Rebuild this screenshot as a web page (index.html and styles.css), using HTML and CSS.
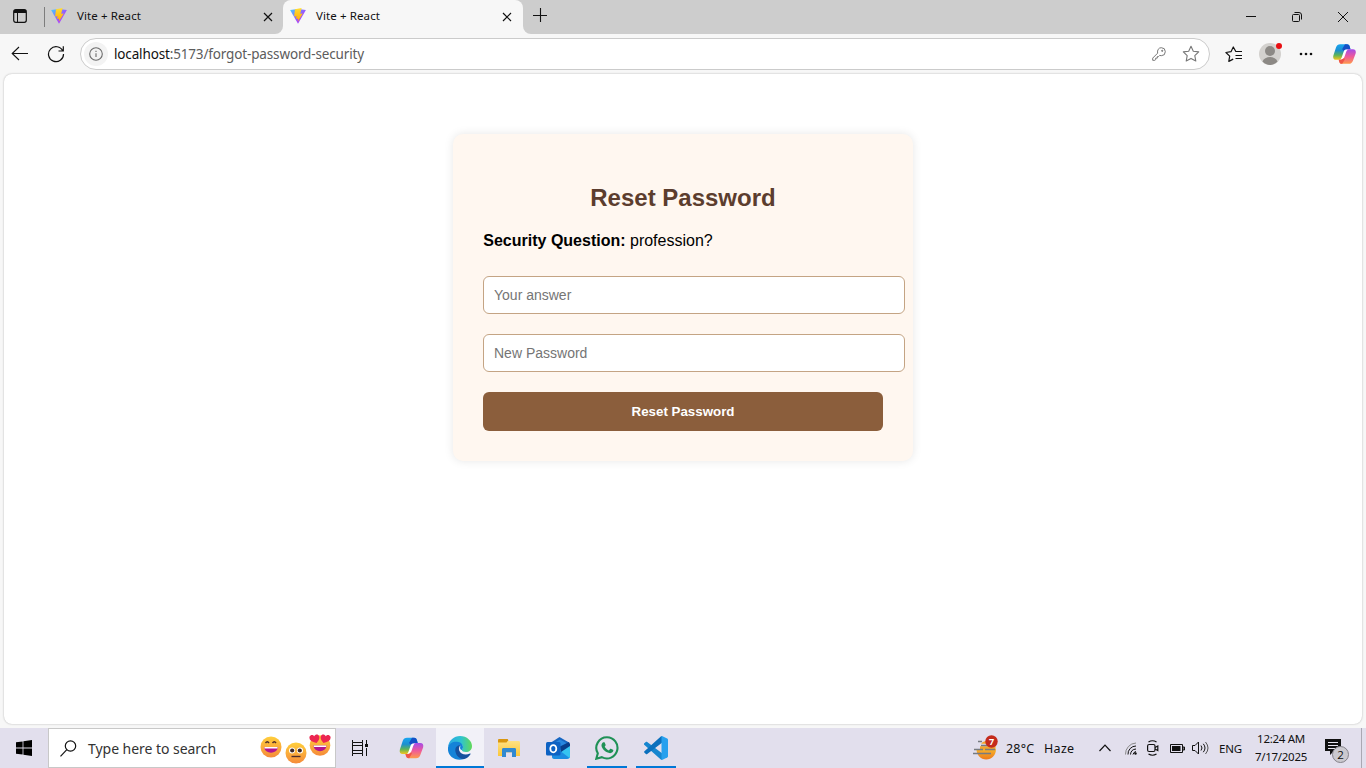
FILE: index.html
```html
<!DOCTYPE html>
<html lang="en">
<head>
<meta charset="utf-8">
<title>Vite + React</title>
<link rel="stylesheet" href="styles.css">
</head>
<body>
<svg class="defs" width="0" height="0" aria-hidden="true">
  <defs>
    <linearGradient id="viteA" x1="0" y1="0" x2="1" y2="1"><stop offset="0" stop-color="#41d1ff"/><stop offset=".6" stop-color="#a04dfe"/><stop offset="1" stop-color="#bd34fe"/></linearGradient>
    <linearGradient id="viteB" x1="0" y1="0" x2="0" y2="1"><stop offset="0" stop-color="#ffdd35"/><stop offset="1" stop-color="#ffa800"/></linearGradient>
    <linearGradient id="cpA" x1="0" y1="0" x2="0" y2="1"><stop offset="0" stop-color="#18a5f0"/><stop offset=".4" stop-color="#1c8fd0"/><stop offset=".7" stop-color="#5cb35a"/><stop offset="1" stop-color="#f4c51c"/></linearGradient>
    <linearGradient id="cpB" x1="0" y1="0" x2="0" y2="1"><stop offset="0" stop-color="#a44bea"/><stop offset=".5" stop-color="#ee5a9b"/><stop offset="1" stop-color="#ff9a4a"/></linearGradient>
    <linearGradient id="edgeA" x1="0" y1="0" x2="1" y2="0"><stop offset="0" stop-color="#2aa7e4"/><stop offset=".55" stop-color="#2fc3cf"/><stop offset="1" stop-color="#62d957"/></linearGradient>
    <linearGradient id="face" x1="0" y1="0" x2="0" y2="1"><stop offset="0" stop-color="#ffcf3c"/><stop offset="1" stop-color="#f58b3a"/></linearGradient>
    <linearGradient id="folder" x1="0" y1="0" x2="0" y2="1"><stop offset="0" stop-color="#ffe183"/><stop offset="1" stop-color="#fbc739"/></linearGradient>
    <linearGradient id="sun" x1="0" y1="0" x2="0" y2="1"><stop offset="0" stop-color="#f8b52c"/><stop offset="1" stop-color="#ec7a1c"/></linearGradient>
    <symbol id="vite" viewBox="0 0 16 16">
      <path d="M.1 2.100 8 .9l7.900 1.200L8 15.800z" fill="url(#viteA)"/>
      <path d="M11.600.1 5 1.200l-.9 7.400 2.500-.4-.6 2.800 2.100-.4-.3 3.200 5-8.300-2.600.3z" fill="url(#viteB)"/>
    </symbol>
    <symbol id="copilot" viewBox="0 0 24 22">
      <path d="M7.500.8h7c2 0 2.600 1 3.100 3l.6 2.200h-2c-2 0-3 .8-3.600 2.800l-1.800 5.700c-.5 1.700-1.500 2.500-3.500 2.500H3.200C.6 17-.3 15 .4 12.500L3.200 4C4 1.800 5.300.8 7.500.8z" fill="url(#cpA)"/>
      <path d="M12.500.8h2c2 0 2.600 1 3.100 3l.6 2.200h-2c-2 0-3 .8-3.600 2.800L9.500 6z" fill="#1450c6"/>
      <path d="M16.500 21.200h-7c-2 0-2.700-1-3.200-3L6 17h1.300c2 0 3-.8 3.600-2.800l1.900-5.700C13.400 6.800 14.500 6 16.400 6h4.400c2.600 0 3.500 2 2.800 4.500L20.800 18c-.8 2.200-2.100 3.200-4.300 3.200z" fill="url(#cpB)"/>
      <path d="M6 17h1.300c2 0 3-.8 3.600-2.800l1.500 2.300-2.700 4.700h-.2c-2 0-2.700-1-3.200-3z" fill="#ef5548"/>
      <path d="M15.500 6.500c-2.300-.3-3.800.2-4.300 1.800l-1.700 5c-.6 1.800-1 2.800-2 3.500 2.200 0 3.800-.8 4.500-2.800l1.600-4.700c.4-1.300.9-2.200 1.900-2.800z" fill="#fff"/>
    </symbol>
    <symbol id="close" viewBox="0 0 10 10"><path d="m1 1 8 8M9 1 1 9" fill="none" stroke="#111" stroke-width="1.200"/></symbol>
  </defs>
</svg>

<header class="tabstrip">
  <div class="strip-left">
    <span class="tab-menu"><svg width="14" height="14" viewBox="0 0 14 14"><rect x=".7" y=".7" width="12.600" height="12.600" rx="2" fill="none" stroke="#111" stroke-width="1.200"/><path d="M1 1h12v3H1z" fill="#111"/><path d="M4.500 3.500V13" stroke="#111"/></svg></span>
    <div class="tab tab-idle">
      <svg width="16" height="16"><use href="#vite"/></svg><span class="tab-title">Vite + React</span>
      <svg class="tab-close" width="10" height="10"><use href="#close"/></svg>
    </div>
  </div>
  <div class="tab-holder">
    <div class="tab tab-active">
      <svg width="16" height="16"><use href="#vite"/></svg><span class="tab-title">Vite + React</span>
      <svg class="tab-close" width="10" height="10"><use href="#close"/></svg>
    </div>
  </div>
  <div class="strip-right">
    <span class="new-tab"><svg width="14" height="14" viewBox="0 0 14 14"><path d="M7.500 0v14M0 7.500h14" stroke="#111" stroke-width="1.100"/></svg></span>
    <div class="window-controls">
      <span><svg width="10" height="10" viewBox="0 0 10 10"><path d="M0 4.500h10" stroke="#111"/></svg></span>
      <span><svg width="10" height="10" viewBox="0 0 10 10" fill="none" stroke="#111"><rect x=".5" y="2.500" width="7" height="7" rx="1"/><path d="M2.500.5H7A2.500 2.500 0 0 1 9.500 3v4.500"/></svg></span>
      <span><svg width="10" height="10" viewBox="0 0 10 10"><path d="m0 0 10 10M10 0 0 10" stroke="#111"/></svg></span>
    </div>
  </div>
</header>

<nav class="toolbar">
  <span class="tool"><svg width="18" height="16" viewBox="0 0 18 16" fill="none" stroke="#111" stroke-width="1.100"><path d="M17 7.500H1.500M8 1 1.200 7.500 8 14"/></svg></span>
  <span class="tool"><svg width="18" height="18" viewBox="0 0 18 18" fill="none" stroke="#111" stroke-width="1.200"><path d="M15.800 6A7.500 7.500 0 1 0 16.500 9M16.300 1.300V6h-4.800"/></svg></span>
  <div class="address">
    <span class="site-info"><svg width="14" height="14" viewBox="0 0 14 14" fill="none" stroke="#6b6b6b" stroke-width="1.100"><circle cx="7" cy="7" r="6.300"/><path d="M7 6.200V10M7 3.800V5"/></svg></span>
    <span class="url"><b>localhost</b>:5173/forgot-password-security</span>
    <svg class="key" width="14" height="14" viewBox="0 0 14 14" fill="none" stroke="#777"><path d="M9.300.7a4 4 0 0 1 0 8C8.700 8.700 8.200 8.600 7.700 8.400L6.500 9.600H5.300v1.500H3.700v1.500L2.900 13.300H.7v-2.200l4.900-4.900C5.100 3.200 6.500.7 9.300.7z"/><circle cx="10.200" cy="3.800" r=".6" fill="#777"/></svg>
    <svg class="star" width="18" height="18" viewBox="0 0 18 18" fill="none" stroke="#777" stroke-width="1.100" stroke-linejoin="round"><path d="m9 1.300 2.300 4.900 5.400.7-3.900 3.700 1 5.400L9 13.400 4.200 16l1-5.400L1.300 6.900l5.400-.7z"/></svg>
  </div>
  <span class="favorites"><svg width="18" height="17" viewBox="0 0 18 17" fill="none" stroke="#111" stroke-width="1.200" stroke-linejoin="round"><path d="M17 5.500h-6.200L8.300 1 6 5.700l-5.100.8 3.800 3.600L3.800 15.400l4.400-2.300M10.500 9.500H17M10.500 12.500H17"/></svg></span>
  <span class="avatar"><svg width="22" height="22" viewBox="0 0 22 22"><circle cx="11" cy="11" r="11" fill="#d3d1ce"/><circle cx="11" cy="8" r="5" fill="#8c8985"/><path d="M3.500 18.500c2-6 13-6 15 0-4 4.500-11 4.500-15 0z" fill="#8c8985"/></svg><i class="dot"></i></span>
  <span class="more"><svg width="14" height="4" viewBox="0 0 14 4" fill="#111"><circle cx="2" cy="2" r="1.300"/><circle cx="7" cy="2" r="1.300"/><circle cx="12" cy="2" r="1.300"/></svg></span>
  <span class="sidebar-copilot"><svg width="23" height="22"><use href="#copilot"/></svg></span>
</nav>

<main class="page">
  <section class="card">
    <h2>Reset Password</h2>
    <p><strong>Security Question:</strong> profession?</p>
    <form>
      <input type="text" placeholder="Your answer">
      <input type="password" placeholder="New Password">
      <button type="button">Reset Password</button>
    </form>
  </section>
</main>

<footer class="taskbar">
  <span class="start"><svg width="16" height="16" viewBox="0 0 16 16"><path d="M0 2.300 6.600 1.400v6.200H0zM7.400 1.300 16 0v7.600H7.400zM0 8.400h6.600v6.200L0 13.700zM7.400 8.400H16V16l-8.600-1.300z"/></svg></span>
  <div class="search">
    <svg width="17" height="17" viewBox="0 0 17 17" fill="none" stroke="#111" stroke-width="1.200"><circle cx="10.500" cy="6" r="5.200"/><path d="M6.800 9.700.5 16.300"/></svg>
    <span class="search-text">Type here to search</span>
    <svg class="emojis" width="72" height="36" viewBox="0 0 72 36">
      <circle cx="12" cy="17" r="10.500" fill="url(#face)"/>
      <path d="M6.500 13q1.800-2.500 3.500 0M13.500 13q1.800-2.500 3.500 0" fill="none" stroke="#4d2b2b" stroke-width="1.400"/>
      <path d="M5.200 17h13.600c-.4 7.500-13.200 7.500-13.600 0z" fill="#b3158e"/><path d="M5.500 17h13v1.500h-13z" fill="#fff"/>
      <circle cx="37" cy="23" r="10.500" fill="url(#face)"/>
      <circle cx="33" cy="20.500" r="3" fill="#fff"/><circle cx="41" cy="20.500" r="3" fill="#fff"/><circle cx="33.200" cy="20.500" r="2.100" fill="#3c2727"/><circle cx="40.800" cy="20.500" r="2.100" fill="#3c2727"/><path d="M32.500 26.500h9" stroke="#4d2b2b" stroke-width="1.400"/>
      <circle cx="61" cy="15.500" r="10.300" fill="url(#face)"/>
      <path d="M57.500 13c-5.500-1.200-7.800-3.500-6.900-6.500 1-2.200 3.600-2 4.600-.3 1-2.100 4-2.500 5 0 .7 2.500-.5 4.700-2.700 6.800zM64.500 13c5.500-1.200 7.800-3.500 6.900-6.500-1-2.200-3.600-2-4.600-.3-1-2.100-4-2.500-5 0-.7 2.500.5 4.700 2.700 6.800z" fill="#ec2651"/>
      <path d="M54.500 15.500h13c-.4 7.500-12.600 7.500-13 0z" fill="#b3158e"/><path d="M54.800 15.500h12.400V17H54.800z" fill="#fff"/>
    </svg>
  </div>
  <span class="task task-view"><svg width="17" height="16" viewBox="0 0 17 16" fill="none" stroke="#111"><path d="M.5 0v2.500h10V0M.5 16v-2.500h10V16M.5 2.500v11M10.500 2.500v11M.5 5.500h10M.5 10.500h10M14.500 0v4M14.500 8v8"/><path d="M13 4h3v3h-3z" fill="#111" stroke="none"/></svg></span>
  <span class="task task-copilot"><svg width="25" height="22"><use href="#copilot"/></svg></span>
  <span class="task current"><svg width="24" height="24" viewBox="0 0 24 24">
    <path d="M0 11C1 4 6 0 12 0c7 0 12 5 12 10 0 4-3 6-6 6-2.500 0-4.200-1-4.200-2s1.200-1.200 1.200-3c0-2-2-4-5.500-4C5 7 2 8 0 11z" fill="url(#edgeA)"/>
    <path d="M0 11.500C1 7.500 5 5.500 9 5.800c3.600.2 6 2.500 6 5.200 0 1.500-.8 2-1.200 3-1.600 0-2.200-1.600-1.300-4.500C8 10 7.500 14 9 17c1.400 3 4.200 5.400 7.500 6.100C6 26.300-1 19 0 11.500z" fill="#1483d8"/>
    <path d="M12.700 9C8 9.200 6.700 12.500 7.600 16.200c1 4.400 4.800 7 8.900 6.900 2.600-1 4.600-2.700 6-4.900.3-.6 0-.9-.5-.6-4.500 2-9.500.7-10.800-3.200-.7-2 .1-4.200 1.500-5.400z" fill="#14519f"/>
  </svg></span>
  <span class="task"><svg width="22" height="20" viewBox="0 0 22 20"><path d="M0 3h20.500c1 0 1.500.5 1.500 1.500V18H0z" fill="url(#folder)"/><path d="M0 4.500V2.300C0 1.500.5 1 1.300 1H9c.8 0 1.200.5 1.200 1.200L8.500 4.500z" fill="#d9960f"/><path d="M4 19v-7.500c0-1 .6-1.500 1.500-1.500h11c1 0 1.500.5 1.500 1.500V19h-4v-4.500H8V19z" fill="#3189d2"/><path d="M8 14.500h6V19H8z" fill="#e3dfef"/></svg></span>
  <span class="task"><svg width="24" height="24" viewBox="0 0 24 24"><path d="M5 6.500 13.500 1 23 6.500V13H5z" fill="#1766c2"/><path d="M8 7 14 3.500 22 8v6H8z" fill="#2787df"/><path d="m24 9-18 10v2c0 1 1 2 2 2h13c2 0 3-1 3-3z" fill="#1c8de1"/><path d="m24 9-9 6.500 8.500 6.500c.3-.5.5-1 .5-2z" fill="#35c4f1"/><path d="m14 10.500 9-4.500 1 2v2l-9 6z" fill="#073e8b"/><rect y="6" width="14.500" height="13.500" rx="1.500" fill="#0d62c3"/><ellipse cx="7.300" cy="12.700" rx="3" ry="3.600" fill="none" stroke="#fff" stroke-width="1.800"/></svg></span>
  <span class="task running"><svg width="24" height="24" viewBox="0 0 24 24"><path d="M12 1.300a10.600 10.600 0 1 1-5.200 19.900L1.300 22.700l1.500-5.400A10.600 10.600 0 0 1 12 1.300z" fill="none" stroke="#1f9156" stroke-width="2.100"/><path d="M8.300 6.300c.5-.3 1.200-.2 1.400.3l.9 2.100c.1.400 0 .8-.9 1.800.8 1.800 2.200 3.100 4.100 3.900l1.300-1.500c.3-.2.500-.2.800-.1l2.100 1c.5.300.4.700.2 1.300-.6 1.600-2.400 2.300-3.900 2-4-.9-7.300-4.300-7.800-7.300-.2-1.500.7-2.900 1.800-3.500z" fill="#1f9156"/></svg></span>
  <span class="task running"><svg width="24" height="24" viewBox="0 0 24 24"><path d="M0 8.500V7.600L1.800 6c.5-.4.900-.4 1.400 0L18 17.300v6.400c-.4.200-.8 0-1.200-.3L.2 8.800z" fill="#1686cf"/><path d="m.3 16.400 1.600 1.600c.4.400.8.400 1.300 0L18 6.700V.3c-.4-.2-.8 0-1.200.3L.2 15.500c-.2.300-.2.600.1.900z" fill="#0b70bd"/><path d="M17.500.2 18 0l5.200 2.500c.5.300.8.700.8 1.300v16.400c0 .6-.3 1-.8 1.300L18 24l-.5-.2z" fill="#27a0ee"/></svg></span>

  <div class="tray">
    <span class="weather"><svg width="26" height="26" viewBox="0 0 26 26"><path d="M3.500 14h19.500c0 6-4.200 10.500-9.800 10.500S3.500 20 3.500 14z" fill="url(#sun)"/><path d="M7 10c3-6 13-5 15.500 1v3.500H7z" fill="#f4a62a"/><path d="M5 7h4M4 10h16" stroke="#e2dfed" stroke-width="2.500"/><path d="M5 6.500h4M8 10.500h11M1 14.500h9M12 14.500h10M0 18.500h18" stroke="#777b80" stroke-width="1.700"/><circle cx="18.500" cy="6.500" r="6.200" fill="#c42b1c"/><text x="18.500" y="10" class="badge-text" text-anchor="middle">7</text></svg></span>
    <span class="temp">28°C</span><span class="haze">Haze</span>
    <svg class="chevron" width="12" height="8" viewBox="0 0 12 8" fill="none" stroke="#111" stroke-width="1.200"><path d="m.5 7 5.500-5.800L11.500 7"/></svg>
    <svg class="wifi" width="14" height="14" viewBox="0 0 14 14" fill="none" stroke="#111"><path d="M1.500 13.500A11 11 0 0 1 12 2" stroke="#888"/><path d="M4 13.500A8 8 0 0 1 12 5M6.500 13.500A6 6 0 0 1 12 8M9 13.500A4 4 0 0 1 12 10.500"/><circle cx="11.500" cy="12.500" r="1.200" fill="#111" stroke="none"/></svg>
    <svg class="cam" width="12" height="16" viewBox="0 0 12 16" fill="none" stroke="#111" stroke-width="1.200"><rect x=".6" y="4.500" width="7.400" height="7" rx="1.500"/><path d="m8 7.500 2.800-1.500v4.500L8 9M1.500 2q4-2.500 8 0M1.500 14q4 2.500 8 0"/></svg>
    <svg class="battery" width="15" height="9" viewBox="0 0 15 9"><path d="M.5.500h12v8H.5zM13 3h1.500v3H13z" fill="none" stroke="#111"/><path d="M2 2h8.500v5H2z" fill="#111"/></svg>
    <svg class="volume" width="17" height="14" viewBox="0 0 17 14" fill="none" stroke="#111"><path d="M.5 4.500h2.500L6.500 1v12L3 9.500H.5zM9 4.500q2 2.500 0 5M11.300 2.800q3.400 4.200 0 8.400"/><path d="M13.500 1q5 6 0 12" stroke="#555"/></svg>
    <span class="lang">ENG</span>
    <div class="clock"><span>12:24 AM</span><span>7/17/2025</span></div>
    <span class="notice"><svg width="24" height="26" viewBox="0 0 24 26"><path d="M0 1h16v12H9l-4 4v-4H0z" fill="#111"/><path d="M3 4.500h10M3 7.500h10M3 10.500h7" stroke="#e8e5f0"/><circle cx="15.500" cy="16.500" r="8" fill="#cbc9cf" stroke="#85838b"/><text x="15.500" y="20.500" text-anchor="middle" class="notice-text">2</text></svg></span>
    <span class="peek"></span>
  </div>
</footer>
</body>
</html>
```
FILE: styles.css
```css
* { box-sizing: border-box; }
body {
  margin: 0; width: 1366px; height: 768px; overflow: hidden;
  display: flex; flex-direction: column;
  background: #f7f7f7; color: #111;
  font-family: "Noto Sans", "Open Sans", sans-serif; font-size: 12px;
}
svg { display: block; flex: none; }
.defs { position: absolute; }
span, b { white-space: nowrap; }

.tabstrip { display: flex; height: 34px; flex: none; }
.strip-left { width: 283px; display: flex; background: #cdcdcd; border-bottom-right-radius: 8px; align-items: center; }
.tab-menu { width: 45px; height: 20px; display: flex; align-items: center; padding: 0 0 2px 13px; border-right: 1px solid #7d7d7d; }
.tab { display: flex; align-items: center; height: 34px; flex: 1; }
.tab-idle { padding: 0 10px 3px 6px; }
.tab-holder { width: 240px; background: #cdcdcd; }
.tab-active { background: #f7f7f7; border-radius: 8px 8px 0 0; padding: 0 11px 3px 7px; }
.tab-title { margin-left: 10px; font-size: 11.5px; letter-spacing: .1px; }
.tab-close { margin: 2px 0 0 auto; }
.strip-right { flex: 1; display: flex; justify-content: space-between; background: #cdcdcd; border-bottom-left-radius: 8px; }
.new-tab { padding: 8px 0 0 10px; }
.window-controls { display: flex; }
.window-controls span { width: 46px; display: grid; place-items: center; }

.toolbar { display: flex; align-items: center; height: 40px; flex: none; padding-left: 2px; }
.tool { width: 36px; display: grid; place-items: center; }
.address { width: 1130px; height: 32px; margin-left: 6px; display: flex; align-items: center; background: #fff; border: 1px solid #cbcbcb; border-radius: 16px; padding: 0 9px 0 3px; }
.site-info { width: 24px; height: 24px; border-radius: 50%; background: #f3f3f3; display: grid; place-items: center; }
.url { margin-left: 6px; font-size: 13.5px; letter-spacing: -.15px; color: #5c5c5c; }
.url b { font-weight: 400; color: #111; }
.key { margin-left: auto; }
.star { margin-left: 16px; }
.favorites { margin-left: 15px; }
.avatar { margin-left: 16px; position: relative; }
.dot { position: absolute; top: 0; right: -1px; width: 6px; height: 6px; border-radius: 50%; background: #e80e12; }
.more { margin-left: 18px; }
.sidebar-copilot { margin-left: 20px; }

.page { height: 650px; flex: none; margin: 0 4px 4px; background: #fff; border-radius: 8px; box-shadow: 0 0 2px rgba(0,0,0,.3); padding-top: 60px; }
.card { width: 460px; height: 327px; margin: 0 auto; padding: 30px; background: #fff7f0; border-radius: 10px; box-shadow: 0 0 10px rgba(0,0,0,.1); font-family: "Liberation Sans", Arial, sans-serif; color: #000; }
.card h2 { margin: 20px 0 21px; font-size: 24px; line-height: 27px; text-align: center; color: #5c3d2e; }
.card p { margin: 0 0 26px; font-size: 16px; line-height: 18px; padding-left: .3px; }
.card input { display: block; width: 422px; height: 38px; margin: 0 0 20px; padding: 10px; border: 1px solid #c4a484; border-radius: 6px; background: #fff; font: 14px "Liberation Sans", Arial, sans-serif; }
.card input::placeholder { color: #757575; }
.card button { display: block; width: 400px; height: 39px; border: 0; border-radius: 6px; background: #8b5e3c; color: #fff; font: bold 13.333px "Liberation Sans", Arial, sans-serif; }

.taskbar { display: flex; height: 40px; flex: none; background: #e2dfed; }
.start { width: 48px; display: grid; place-items: center; }
.search { width: 288px; display: flex; align-items: center; background: #fff; border: 1px solid #c8c8c8; padding-left: 11px; }
.search-text { margin-left: 11px; font-size: 14px; letter-spacing: -.04px; color: #333; }
.emojis { margin: 0 4px 0 auto; }
.task { width: 49px; display: grid; place-items: center; }
.task-view { width: 48px; }
.task-copilot { width: 52px; padding-left: 2px; }
.current { width: 48px; background: #f2f1f8; border-bottom: 2px solid #0078d7; padding-top: 2px; }
.running { background: linear-gradient(#0078d7, #0078d7) center bottom / 40px 2px no-repeat; }
.tray { margin-left: auto; display: flex; align-items: center; width: 393px; font-size: 12.5px; }
.temp { width: 38px; margin-left: 7px; letter-spacing: .2px; }
.haze { width: 55px; letter-spacing: .3px; }
.chevron { margin-right: 13px; }
.wifi { margin-right: 9px; }
.cam { margin-right: 11px; }
.battery { margin-right: 7px; }
.volume { margin-right: 10px; }
.lang { width: 25px; font-size: 11.5px; letter-spacing: -.2px; }
.clock { width: 74px; display: flex; flex-direction: column; align-items: center; font-size: 11.5px; line-height: 18px; letter-spacing: -.3px; }
.notice { margin: 6px 0 0 7px; }
.peek { width: 1px; height: 40px; margin-left: auto; margin-right: 4px; background: #aaa8b3; }
.badge-text { font: bold 9px "Open Sans", sans-serif; fill: #fff; }
.notice-text { font: 11.5px "Open Sans", sans-serif; fill: #111; }
```
